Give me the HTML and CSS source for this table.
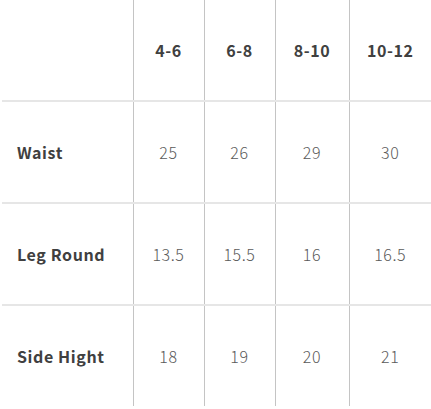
FILE: index.html
```html
<!DOCTYPE html>
<html>
<head>
<meta charset="utf-8">
<link rel="stylesheet" href="styles.css">
</head>
<body>
<table class="size-table">
  <colgroup>
    <col class="c-label">
    <col class="c1">
    <col class="c2">
    <col class="c3">
    <col class="c4">
  </colgroup>
  <tr class="head">
    <th></th><th>4-6</th><th>6-8</th><th>8-10</th><th>10-12</th>
  </tr>
  <tr>
    <th class="label">Waist</th><td>25</td><td>26</td><td>29</td><td>30</td>
  </tr>
  <tr>
    <th class="label">Leg Round</th><td>13.5</td><td>15.5</td><td>16</td><td>16.5</td>
  </tr>
  <tr class="last">
    <th class="label">Side Hight</th><td>18</td><td>19</td><td>20</td><td>21</td>
  </tr>
</table>
</body>
</html>
```

FILE: styles.css
```css
html, body {
  margin: 0;
  padding: 0;
  background: #fff;
}
body {
  padding-left: 2px;
  font-family: "Noto Sans CJK JP", "Noto Sans", sans-serif;
}
.size-table {
  border-collapse: collapse;
  table-layout: fixed;
  width: 429px;
}
.c-label { width: 131px; }
.c1 { width: 71px; }
.c2 { width: 71px; }
.c3 { width: 74px; }
.c4 { width: 82px; }
.size-table th,
.size-table td {
  height: 100px;
  padding: 0;
  text-align: center;
  vertical-align: middle;
  border-bottom: 2px solid #e6e6e6;
  border-left: 1px solid #c4c4c4;
  font-size: 16px;
  letter-spacing: 0.6px;
}
.size-table tr > :first-child {
  border-left: none;
}
.size-table tr.last th,
.size-table tr.last td {
  border-bottom: none;
}
.size-table th {
  font-weight: 700;
  color: #404040;
}
.size-table th.label {
  text-align: left;
  padding-left: 15px;
}
.size-table td {
  font-weight: 300;
  color: #5a5a5a;
}
```
